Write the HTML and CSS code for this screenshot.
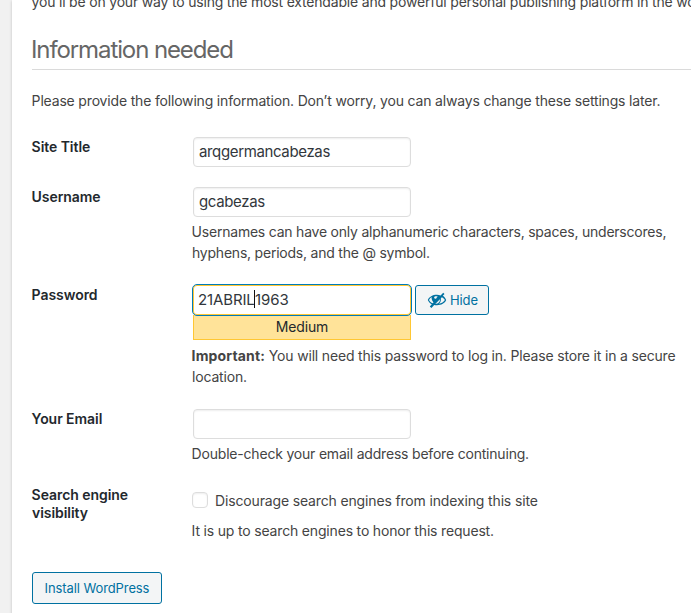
FILE: index.html
```
<!DOCTYPE html>
<html lang="en">
<head>
<meta charset="utf-8">
<title>WordPress Installation</title>
<link rel="stylesheet" href="styles.css">
</head>
<body>
<main class="panel">
  <p class="intro">you’ll be on your way to using the most extendable and powerful personal publishing platform in the world.</p>
  <h1>Information needed</h1>
  <p class="lead">Please provide the following information. Don’t worry, you can always change these settings later.</p>
  <form>
    <div class="row row-title">
      <label class="name" for="title">Site Title</label>
      <div class="field"><input class="text" id="title" type="text" value="arqgermancabezas"></div>
    </div>
    <div class="row row-user">
      <label class="name" for="user">Username</label>
      <div class="field">
        <input class="text" id="user" type="text" value="gcabezas">
        <p class="user-note">Usernames can have only alphanumeric characters, spaces, underscores,<br>hyphens, periods, and the @ symbol.</p>
      </div>
    </div>
    <div class="row row-pass">
      <div class="name">Password</div>
      <div class="field">
        <div class="pass-line">
          <div class="pass" role="textbox"><span>21ABRIL</span><i class="caret"></i><span>1963</span></div>
          <button type="button" class="button hide">
            <svg viewBox="0 0 20 20" width="20" height="20"><path fill="currentColor" fill-rule="evenodd" d="M16.2 2.700l1.300 1.300-1.700 1.700C17.300 6.700 18.500 8.200 19.200 10c-1.400 3.200-4.800 5.200-9.200 5.200-1 0-1.900-.1-2.800-.3L4.400 17.900 2.800 16.400l2-2.200C2.900 13.300 1.600 11.800.8 10c1.400-3.200 4.800-5.200 9.200-5.200 1.300 0 2.500.2 3.600.6zM4.500 6.900C3.300 7.700 2.500 8.800 2 10c.7 1.400 2 2.600 3.700 3.300l.8-.9C5.200 10.700 4.500 9 4.500 6.900zM8.200 6.300C7.400 6.700 7 7.300 7.200 8c.2.600.8.900 1.400.8.600-.1.900-.5 1-1.100l1.100-1.100c-.8-.3-1.700-.4-2.500-.3zM14.800 7.300l-1 1.100c.4 2-.3 4-2 5.300 2.700-.4 5-1.700 6.100-3.700-.6-1.100-1.700-2-3.100-2.700zM12.900 9.300l-4.600 4.600c2.600.1 4.900-1.700 4.600-4.600z"/></svg>
            <span>Hide</span>
          </button>
        </div>
        <div class="strength">Medium</div>
        <p><strong>Important:</strong> You will need this password to log in. Please store it in a secure<br>location.</p>
      </div>
    </div>
    <div class="row row-mail">
      <label class="name" for="mail">Your Email</label>
      <div class="field">
        <input class="text" id="mail" type="email">
        <p class="mail-note">Double-check your email address before continuing.</p>
      </div>
    </div>
    <div class="row row-search">
      <div class="name">Search engine<br>visibility</div>
      <div class="field">
        <label class="check"><input type="checkbox"><span>Discourage search engines from indexing this site</span></label>
        <p>It is up to search engines to honor this request.</p>
      </div>
    </div>
    <button type="button" class="button install">Install WordPress</button>
  </form>
</main>
</body>
</html>
```
FILE: styles.css
```
* { box-sizing: border-box; }
html { height: 100%; overflow: hidden; background: #f1f1f1; }
body {
  margin: 0;
  height: 613px;
  overflow: hidden;
  padding-left: 12px;
  background: #f1f1f1;
  color: #444;
  font: 14px/21px Inter, "Liberation Sans", sans-serif;
  letter-spacing: -0.175px;
}
.panel {
  display: flow-root;
  width: 740px;
  height: 700px;
  padding: 0 20px;
  background: #fff;
  box-shadow: 0 1px 3px rgba(0, 0, 0, .2);
}
p { margin: 0; text-indent: -0.4px; }
.intro { margin-top: -9px; white-space: nowrap; letter-spacing: -0.19px; }
h1 {
  margin: 21px 0 20px;
  height: 37px;
  border-bottom: 1px solid #dadada;
  color: #666;
  font-size: 24px;
  font-weight: 400;
  line-height: 33px;
  letter-spacing: -1.1px;
  text-indent: -1px;
}
.lead { white-space: nowrap; }
form { padding-top: 26px; }
.row { display: flex; }
.name {
  width: 160px;
  padding-top: 1px;
  color: #23282d;
  font-weight: 600;
  line-height: 18px;
  letter-spacing: -0.06px;
  text-indent: -0.4px;
}
.field { flex: 1; white-space: nowrap; }
.row-title { height: 50px; }
.row-user { height: 98px; }
.row-pass { height: 124px; }
.row-mail { height: 82px; }
.row-search { height: 81px; }
.row-search .name { margin-top: -6px; }
.text {
  display: block;
  width: 218px;
  height: 30px;
  margin: 0 1px 4px;
  padding: 0 5px 1px;
  border: 1px solid #ddd;
  border-radius: 4px;
  background: #fff;
  box-shadow: inset 0 1px 2px rgba(0, 0, 0, .07);
  color: #32373c;
  font: 15px/27px Inter, "Liberation Sans", sans-serif;
  letter-spacing: -0.36px;
  outline: 0;
}
.user-note { letter-spacing: -0.22px; }
.mail-note { letter-spacing: -0.2px; }
strong { letter-spacing: 0.15px; }
.pass-line { display: flex; margin-top: -1px; gap: 3px; }
.pass {
  display: flex;
  align-items: center;
  width: 220px;
  height: 32px;
  padding: 0 5px 2px;
  border: 1px solid #007cba;
  border-radius: 5px;
  box-shadow: inset 0 0 0 1px #ffc733;
  color: #32373c;
  font-size: 15px;
  letter-spacing: -0.13px;
}
.caret { width: 1px; height: 18px; margin: 0 -0.3px; background: #111; }
.button {
  display: flex;
  align-items: center;
  border: 1px solid #0071a1;
  border-radius: 3px;
  background: #f3f5f6;
  color: #0071a1;
  font: 13px/28px Inter, "Liberation Sans", sans-serif;
}
.hide { width: 74px; height: 30px; margin-top: 1px; padding: 0 0 0 11px; gap: 3px; letter-spacing: -0.1px; }
.strength {
  width: 218px;
  height: 25px;
  margin: -1px 1px 5px;
  border: 1px solid #ffc733;
  border-top: 0;
  background: #ffe399;
  color: #23282d;
  text-align: center;
  line-height: 24px;
}
.check { display: flex; align-items: center; height: 21px; margin: -2px 0 10px; }
.check input {
  appearance: none;
  width: 16px;
  height: 16px;
  margin: 0 7px 0 0;
  border: 1px solid #ddd;
  border-radius: 4px;
  background: #fff;
  box-shadow: inset 0 1px 2px rgba(0, 0, 0, .07);
}
.check span { padding-top: 1px; letter-spacing: -0.15px; }
.install { width: 130px; height: 32px; padding: 0; justify-content: center; letter-spacing: -0.1px; }
```
